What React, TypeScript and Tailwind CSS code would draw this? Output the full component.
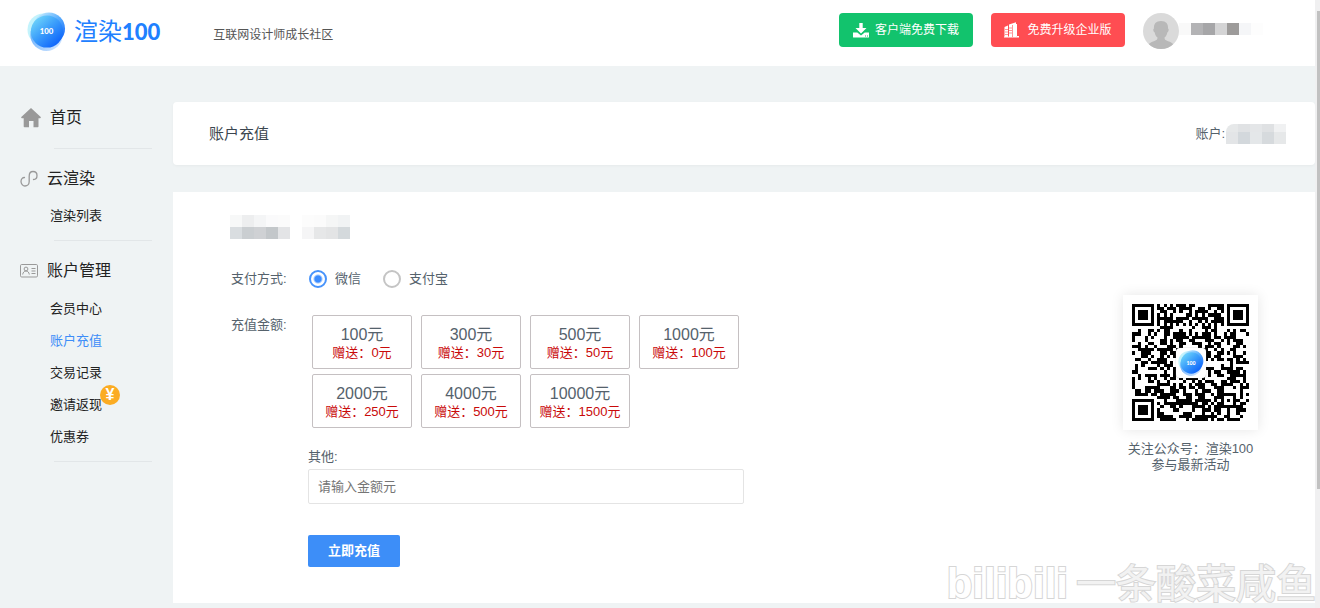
import { useState } from "react";

const AMOUNTS = [
  { value: 100, bonus: 0 },
  { value: 300, bonus: 30 },
  { value: 500, bonus: 50 },
  { value: 1000, bonus: 100 },
  { value: 2000, bonus: 250 },
  { value: 4000, bonus: 500 },
  { value: 10000, bonus: 1500 },
];

const ACCOUNT_LINKS = ["会员中心", "账户充值", "交易记录", "邀请返现", "优惠券"];

const QR_SIZE = 37;

// finder pattern at one of the three corners, null when outside of it
function finder(x: number, y: number): boolean | null {
  const corners = [
    [0, 0],
    [QR_SIZE - 7, 0],
    [0, QR_SIZE - 7],
  ];
  for (const [cx, cy] of corners) {
    const dx = Math.abs(x - cx - 3);
    const dy = Math.abs(y - cy - 3);
    const d = Math.max(dx, dy);
    if (d <= 4) return d === 3 || d <= 1;
  }
  return null;
}

function qrPath() {
  let seed = 20231;
  let d = "";
  for (let y = 0; y < QR_SIZE; y++) {
    for (let x = 0; x < QR_SIZE; x++) {
      seed = (seed * 1103515245 + 12345) % 2147483648;
      const f = finder(x, y);
      const align = Math.max(Math.abs(x - 30), Math.abs(y - 30));
      let on = (seed >> 16) % 100 < 50;
      if (f !== null) on = f;
      else if (align <= 2) on = align !== 1;
      else if (x === 6 || y === 6) on = (x + y) % 2 === 0;
      if (on) d += `M${x} ${y}h1v1h-1z`;
    }
  }
  return d;
}

function LogoMark({ id, className }: { id: string; className: string }) {
  return (
    <svg viewBox="0 0 40 40" className={className} aria-hidden="true">
      <defs>
        <linearGradient id={`${id}-a`} x1="0.1" y1="0.1" x2="0.8" y2="0.9">
          <stop offset="0" stopColor="#6fd6fa" />
          <stop offset="0.45" stopColor="#3fa2fb" />
          <stop offset="1" stopColor="#0f66fb" />
        </linearGradient>
        <linearGradient id={`${id}-b`} x1="0.2" y1="0" x2="0.9" y2="0.8">
          <stop offset="0" stopColor="#c4ebff" />
          <stop offset="0.5" stopColor="#5aaefd" />
          <stop offset="1" stopColor="#1a6efb" />
        </linearGradient>
        <linearGradient id={`${id}-c`} x1="0" y1="0.2" x2="1" y2="1">
          <stop offset="0" stopColor="#5aa8fd" />
          <stop offset="1" stopColor="#dcebff" />
        </linearGradient>
      </defs>
      <circle cx="17" cy="18" r="16.500" fill="#c3f3fc" />
      <circle cx="20" cy="23.500" r="16.500" fill={`url(#${id}-c)`} />
      <circle cx="22.500" cy="17" r="16.500" fill={`url(#${id}-b)`} />
      <circle cx="20.500" cy="20" r="16.500" fill={`url(#${id}-a)`} />
      <text x="20" y="23" textAnchor="middle" fontSize="8" fontWeight="900" fill="#fff" fontFamily="Lato, sans-serif">
        100
      </text>
    </svg>
  );
}

function DownloadIcon() {
  return (
    <svg viewBox="0 0 16 15" className="h-[15px] w-4 fill-white" aria-hidden="true">
      <path d="M6.300 0h3.400v5h3.800L8 10.500 2.500 5h3.800z" />
      <path d="M0 9.500h4.300L8 12.500l3.700-3H16V14a.6.6 0 0 1-.6.6H.6A.6.6 0 0 1 0 14z" />
      <path d="M12 12.500h1v1h-1zM14 12.500h1v1h-1z" fill="#12c36d" />
    </svg>
  );
}

function BuildingIcon() {
  return (
    <svg viewBox="0 0 15 16" className="h-4 w-[15px]" aria-hidden="true">
      <path d="M0.500 5 4 3.500V15H.5z" fill="#fff" />
      <path d="M5 2.500 12 .3V15H5z" fill="#fff" />
      <path d="M12.500 2v12.500H15" fill="none" stroke="#fff" strokeWidth="1" />
      <path d="M0 15h15" stroke="#fff" />
      <path d="M8.500 3v12M1 7.500h3M1 10h3M1 12.500h3M5 6h3M5 8.500h3M5 11h3" stroke="#ff4d52" strokeWidth="0.600" />
    </svg>
  );
}

function Avatar() {
  return (
    <svg viewBox="0 0 36 36" className="h-9 w-9 shrink-0" role="img" aria-label="avatar">
      <clipPath id="avatar-clip">
        <circle cx="18" cy="18" r="18" />
      </clipPath>
      <g clipPath="url(#avatar-clip)">
        <path d="M0 0h36v36H0z" fill="#dadada" />
        <path
          d="M18 8c5 0 7.500 3 7 7.500 1 .2 1 3-.7 4-.5 2.500-1.300 4-2.800 5 0 2 .8 2.500 3 3.500 4 1.500 7 2.500 7.500 8H4c.5-5.500 3.500-6.500 7.500-8 2.200-1 3-1.500 3-3.500-1.500-1-2.300-2.500-2.800-5-1.700-1-1.700-3.800-.7-4C10.500 11 13 8 18 8z"
          fill="#b8b8b8"
        />
      </g>
    </svg>
  );
}

function HomeIcon() {
  return (
    <svg viewBox="0 0 20 20" className="h-5 w-5 fill-[#999]" aria-hidden="true">
      <path d="M10 0 20 9.200l-.8 1.100H17.500V18.400a.8.8 0 0 1-.8.8H12.500V13h-4.500v6.200H3.500a.8.8 0 0 1-.8-.8v-8.100H.8L0 9.200z" />
    </svg>
  );
}

function CloudIcon() {
  return (
    <svg viewBox="0 0 18 18" className="h-[18px] w-[18px]" fill="none" stroke="#999" strokeWidth="1.300" strokeLinecap="round" aria-hidden="true">
      <path d="M4.500 7.500C2.500 7.500 1 9.300 1 11.500S2.800 16 5 16s4.200-1.800 4.200-4.500V6.300C9.200 3.300 10.800 1.500 13 1.500s4 1.600 4 4-1.300 4-3.500 4" />
    </svg>
  );
}

function CardIcon() {
  return (
    <svg viewBox="0 0 18 14" className="h-[14px] w-[18px]" fill="none" stroke="#999" aria-hidden="true">
      <rect x="0.500" y="0.500" width="17" height="12.500" rx="1.200" />
      <circle cx="6" cy="5" r="1.900" />
      <path d="M2.700 10.500C3 8.400 4.200 7 6 7s3 1.400 3.300 3.500M11.500 4.500h4M11.500 7h4M11.500 9.500h4" />
    </svg>
  );
}

function Mosaic({ rows, className }: { rows: string[][]; className?: string }) {
  return (
    <div className={`flex flex-col overflow-hidden ${className ?? ""}`} aria-hidden="true">
      {rows.map((row, i) => (
        <div key={i} className="flex h-3 shrink-0">
          {row.map((color, j) => (
            <span key={j} className="w-3" style={{ backgroundColor: color }} />
          ))}
        </div>
      ))}
    </div>
  );
}

function Header() {
  return (
    <header className="flex h-[66px] items-start bg-white pr-[52px] pl-[27px]">
      <a href="#" className="flex items-center gap-2 pt-3">
        <LogoMark id="logo" className="h-[39px] w-[39px]" />
        <span className="flex items-center text-2xl leading-9 text-[#2080ff]">
          渲染<b className="font-[Lato] text-[22px] font-black">100</b>
        </span>
      </a>
      <p className="ml-[53px] pt-[25px] text-xs leading-5 text-[#555]">互联网设计师成长社区</p>
      <div className="ml-auto flex items-start gap-[18px] pt-[13px]">
        <button className="flex h-[34px] w-[134px] items-center justify-center gap-[6px] rounded bg-[#12c36d] text-xs text-white">
          <DownloadIcon />
          客户端免费下载
        </button>
        <button className="flex h-[34px] w-[134px] items-center justify-center gap-2 rounded bg-[#ff4d52] text-xs text-white">
          <BuildingIcon />
          免费升级企业版
        </button>
        <div className="flex items-start">
          <Avatar />
          <Mosaic className="mt-[10px]" rows={[["#f9f9f9", "#b3b3b5", "#a6a6a8", "#d4d4d5", "#9d9b9a", "#f5f6f8", "#fdfdfd"]]} />
        </div>
      </div>
    </header>
  );
}

function Sidebar() {
  return (
    <nav className="w-[173px] shrink-0 pt-10 text-[13px] text-[#222]">
      <a href="#" className="flex h-6 items-center gap-[9px] pl-[21px] text-base">
        <HomeIcon />
        首页
      </a>
      <hr className="mt-[18px] mr-[21px] ml-[54px] border-[#e2e6e8]" />
      <a href="#" className="mt-[18px] flex h-6 items-center gap-[9px] pl-5 text-base">
        <CloudIcon />
        云渲染
      </a>
      <a href="#" className="mt-[9px] flex h-8 items-center pl-[50px]">渲染列表</a>
      <hr className="mt-2 mr-[21px] ml-[54px] border-[#e2e6e8]" />
      <a href="#" className="mt-[18px] flex h-6 items-center gap-[9px] pl-5 text-base">
        <CardIcon />
        账户管理
      </a>
      <ul className="mt-[10px]">
        {ACCOUNT_LINKS.map((label) => (
          <li key={label} className="flex h-8 items-center pl-[50px]">
            <a href="#" className={label === "账户充值" ? "text-[#3d8df8]" : "relative"}>
              {label}
              {label === "邀请返现" && (
                <span className="absolute -top-[10px] left-full -ml-[2px] flex h-5 w-5 items-center justify-center rounded-full bg-[#fbac23] text-base font-bold text-white">
                  ¥
                </span>
              )}
            </a>
          </li>
        ))}
      </ul>
      <hr className="mt-2 mr-[21px] ml-[54px] border-[#e2e6e8]" />
    </nav>
  );
}

function PayOption({ id, label, checked, onChange }: { id: string; label: string; checked: boolean; onChange: () => void }) {
  return (
    <label htmlFor={id} className="flex items-center gap-2">
      <input
        id={id}
        type="radio"
        name="pay"
        checked={checked}
        onChange={onChange}
        className="h-[18px] w-[18px] appearance-none rounded-full border-2 border-[#c4c4c4] checked:border-[#4793fb] checked:bg-[radial-gradient(circle,#3b8cff_3px,transparent_5px)]"
      />
      {label}
    </label>
  );
}

function QrCode() {
  return (
    <div className="mt-[103px] mr-[57px] ml-auto text-center leading-4">
      <div className="relative flex h-[135px] w-[135px] items-center justify-center bg-white shadow-[0_0_12px_rgba(0,0,0,0.1)]">
        <svg viewBox="0 0 37 37" className="h-[117px] w-[117px]" shapeRendering="crispEdges" role="img" aria-label="渲染100">
          <path d={qrPath()} />
        </svg>
        <div className="absolute rounded bg-white p-[2px] shadow-[0_0_1px_#999]">
          <LogoMark id="qr" className="h-[26px] w-[26px]" />
        </div>
      </div>
      <p className="mt-[11px]">
        关注公众号：渲染100
        <br />
        参与最新活动
      </p>
    </div>
  );
}

export default function App() {
  const [pay, setPay] = useState("wechat");
  const [amount, setAmount] = useState("");

  return (
    <div className="relative flex min-h-screen overflow-hidden bg-[#eff3f4] font-['Liberation_Sans','Noto_Sans_CJK_SC',sans-serif]">
      <div className="min-w-0 flex-1">
        <Header />
        <div className="flex">
          <Sidebar />
          <main className="min-w-0 flex-1 pt-9 pb-[5px] text-[13px] text-[#55626c]">
            <section className="flex h-[63px] items-center justify-between rounded bg-white pr-[29px] pl-9 shadow-[0_1px_3px_rgba(0,0,0,0.04)]">
              <h1 className="pt-[2px] text-[15px] text-[#3b464f]">账户充值</h1>
              <div className="flex items-center gap-px">
                账户:
                <Mosaic
                  className="h-5 justify-end rounded-tl-lg"
                  rows={[
                    ["#e6e8e9", "#e0e2e4", "#e4e6e8", "#dfe1e3", "#f0f1f2"],
                    ["#e3e5e7", "#d3d8dc", "#e4e7e9", "#d6dadd", "#e6e8e9"],
                  ]}
                />
              </div>
            </section>

            {/* Recharge form */}
            <section className="mt-[27px] flex bg-white pb-9">
              <form className="pt-[23px] pl-[57px]" onSubmit={(e) => e.preventDefault()}>
                <div className="flex gap-3">
                  <Mosaic
                    rows={[
                      ["#f7f8f8", "#edeeef", "#f4f5f6", "#fafafb", "#fbfbfb"],
                      ["#d9dde0", "#caced1", "#cfd1d4", "#c3c7ca", "#e3e4e6"],
                    ]}
                  />
                  <Mosaic
                    rows={[
                      ["#fcfcfc", "#fbfbfb", "#f5f6f6", "#f1f3f4"],
                      ["#f5f5f6", "#e6e7e8", "#e3e4e5", "#d4d9dc"],
                    ]}
                  />
                </div>

                <div className="mt-[30px] flex h-5 items-center">
                  <span className="w-[79px] pl-px">支付方式:</span>
                  <div className="flex gap-[22px]">
                    <PayOption id="wechat" label="微信" checked={pay === "wechat"} onChange={() => setPay("wechat")} />
                    <PayOption id="alipay" label="支付宝" checked={pay === "alipay"} onChange={() => setPay("alipay")} />
                  </div>
                </div>

                <div className="mt-[26px] flex">
                  <span className="w-[78px] pl-px leading-5">充值金额:</span>
                  <div>
                    <div className="grid w-fit grid-cols-4 gap-x-[9px] gap-y-[5px] pl-1">
                      {AMOUNTS.map((a) => (
                        <button
                          key={a.value}
                          type="button"
                          onClick={() => setAmount(String(a.value))}
                          className="h-[54px] w-[100px] rounded-[2px] border border-[#c5c0c2] pt-px"
                        >
                          <span className="block text-base leading-5">{a.value}元</span>
                          <span className="block leading-4 text-[#c90a0a]">赠送：{a.bonus}元</span>
                        </button>
                      ))}
                    </div>
                    <label htmlFor="other" className="mt-[19px] block leading-5">其他:</label>
                    <input
                      id="other"
                      value={amount}
                      onChange={(e) => setAmount(e.target.value)}
                      placeholder="请输入金额元"
                      className="mt-[2px] block h-[35px] w-[436px] rounded-[2px] border border-[#e4e4e4] px-[9px] placeholder:text-[#757575]"
                    />
                    <button className="mt-[31px] block h-8 w-[92px] rounded-[2px] bg-[#3d8ef8] font-bold text-white">立即充值</button>
                  </div>
                </div>
              </form>
              <QrCode />
            </section>
          </main>
        </div>
      </div>

      {/* Scroll track */}
      <div className="flex w-[5px] shrink-0 flex-col items-end bg-[#f0f0f1] pt-[11px]">
        <span className="h-4/5 w-[3px] bg-[#c1c1c1]" />
      </div>

      {/* Watermark */}
      <div className="pointer-events-none absolute right-1 bottom-0 flex items-end gap-2 whitespace-nowrap [-webkit-text-stroke:2px_#d6d6d6] [paint-order:stroke]">
        <span className="text-[42px] leading-[48px] font-bold text-white">bilibili</span>
        <span className="text-[40px] leading-[48px] text-[#f2f2f2]">一条酸菜咸鱼</span>
      </div>
    </div>
  );
}
